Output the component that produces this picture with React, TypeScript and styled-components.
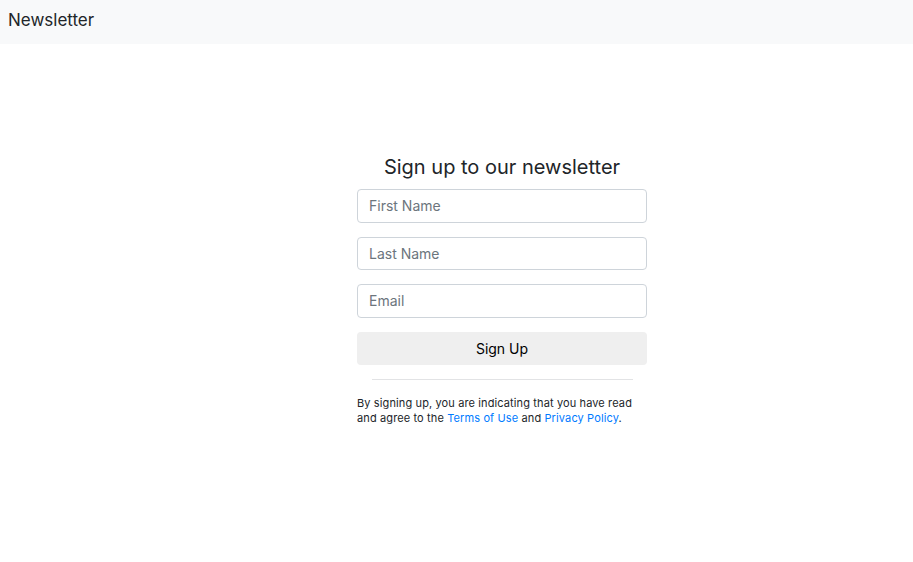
import React, { useState } from 'react';
import styled, { createGlobalStyle } from 'styled-components';

const GlobalStyle = createGlobalStyle`
  body {
    margin: 0;
    font-family: Inter, "Liberation Sans", Arial, sans-serif;
    color: #212529;
    background: #fff;
  }
`;

const App = () => {
  const [firstName, setFirstName] = useState('');
  const [lastName, setLastName] = useState('');
  const [email, setEmail] = useState('');

  const handleSubmit = (e: React.FormEvent<HTMLFormElement>) => {
    e.preventDefault();
  };

  return (
    <>
      <GlobalStyle />
      <Navbar>
        <Brand>Newsletter</Brand>
      </Navbar>
      <Main>
        <FormContainer onSubmit={handleSubmit}>
          <Title>Sign up to our newsletter</Title>
          <Input
            type="text"
            placeholder="First Name"
            value={firstName}
            onChange={(e) => setFirstName(e.target.value)}
          />
          <Input
            type="text"
            placeholder="Last Name"
            value={lastName}
            onChange={(e) => setLastName(e.target.value)}
          />
          <Input
            type="email"
            placeholder="Email"
            value={email}
            onChange={(e) => setEmail(e.target.value)}
          />
          <SubmitButton type="submit">Sign Up</SubmitButton>
          <Divider />
          <Terms>
            By signing up, you are indicating that you have read and agree to the{' '}
            <Link href="#">Terms of Use</Link> and <Link href="#">Privacy Policy</Link>.
          </Terms>
        </FormContainer>
      </Main>
    </>
  );
};

export default App;

const Navbar = styled.nav`
  display: flex;
  align-items: center;
  box-sizing: border-box;
  height: 44px;
  padding: 0 8px 5px;
  background-color: #f8f9fa;
`;

const Brand = styled.span`
  font-size: 17px;
  color: #212529;
`;

const Main = styled.main`
  display: flex;
  justify-content: center;
  padding: 110px 0 0 91px;
`;

const FormContainer = styled.form`
  display: flex;
  flex-direction: column;
  width: 290px;
`;

const Title = styled.h1`
  margin: 0 0 9px;
  font-size: 20px;
  font-weight: 400;
  line-height: 26px;
  text-align: center;
`;

const Input = styled.input`
  box-sizing: border-box;
  height: 33.5px;
  margin-bottom: 14px;
  padding: 0 11px;
  border: 1px solid #ced4da;
  border-radius: 4px;
  font-family: inherit;
  font-size: 14px;
  color: #495057;

  &::placeholder {
    color: #6c757d;
  }
`;

const SubmitButton = styled.button`
  height: 33.5px;
  border: none;
  border-radius: 4px;
  background-color: #efefef;
  font-family: inherit;
  font-size: 14px;
  color: #000;
  cursor: pointer;
`;

const Divider = styled.hr`
  width: 90%;
  margin: 14px auto 16px;
  border: none;
  border-top: 1px solid #e2e3e5;
`;

const Terms = styled.p`
  margin: 0;
  font-size: 11px;
  letter-spacing: 0.12px;
  line-height: 15px;
  color: #212529;
`;

const Link = styled.a`
  color: #007bff;
  text-decoration: none;
`;
